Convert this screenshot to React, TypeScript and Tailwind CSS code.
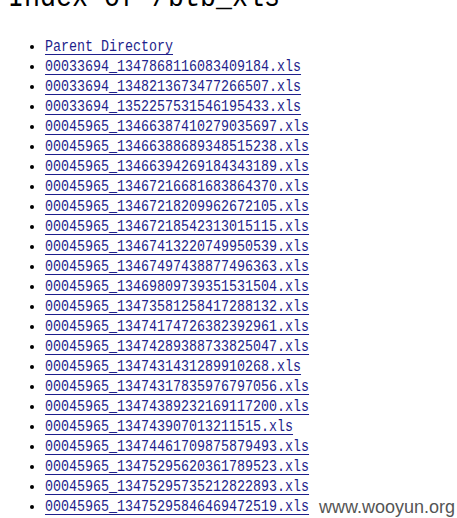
import React from "react";

const files = [
  "00033694_13478681160834091 84.xls",
  "00033694_13482136734772665 07.xls",
  "00033694_13522575315461954 33.xls",
  "00045965_13466387410279035697.xls",
  "00045965_13466388689348515238.xls",
  "00045965_13466394269184343189.xls",
  "00045965_13467216681683864370.xls",
  "00045965_13467218209962672105.xls",
  "00045965_13467218542313015115.xls",
  "00045965_13467413220749950539.xls",
  "00045965_13467497438877496363.xls",
  "00045965_13469809739351531504.xls",
  "00045965_13473581258417288132.xls",
  "00045965_13474174726382392961.xls",
  "00045965_13474289388733825047.xls",
  "00045965_13474314312899 10268.xls",
  "00045965_13474317835976797056.xls",
  "00045965_13474389232169117200.xls",
  "00045965_1347439070132115 15.xls",
  "00045965_13474461709875879493.xls",
  "00045965_13475295620361789523.xls",
  "00045965_13475295735212822893.xls",
  "00045965_13475295846469472519.xls",
].map((f) => f.replace(/ /g, ""));

const mono = { fontFamily: '"Liberation Mono", "DejaVu Sans Mono", monospace' };

const App = () => {
  return (
    <div className="relative h-[518px] w-[457px] overflow-hidden bg-white">
      <h1
        style={mono}
        className="mt-[-22px] ml-[8px] origin-left scale-x-[0.8333] text-[32px] leading-[40px] text-black"
      >
        Index of /btb_xls
      </h1>
      <ul style={mono} className="mt-[19px] ml-[8px] list-disc pl-[37px] text-[16px] leading-[20px]">
        <li className="marker:text-black">
          <a href="#" className="inline-block origin-left scale-x-[0.8333] text-[#1f1f8c] underline underline-offset-[3px]">
            Parent Directory
          </a>
        </li>
        {files.map((f) => (
          <li key={f} className="marker:text-black">
            <a href="#" className="inline-block origin-left scale-x-[0.8333] text-[#1f1f8c] underline underline-offset-[3px]">
              {f}
            </a>
          </li>
        ))}
      </ul>
      <div
        style={{ fontFamily: '"Liberation Sans", Arial, sans-serif' }}
        className="absolute right-[2px] bottom-0 bg-white/80 pl-[6px] text-[18px] leading-[22px] text-[#555]"
      >
        www.wooyun.org
      </div>
    </div>
  );
};

export default App;
